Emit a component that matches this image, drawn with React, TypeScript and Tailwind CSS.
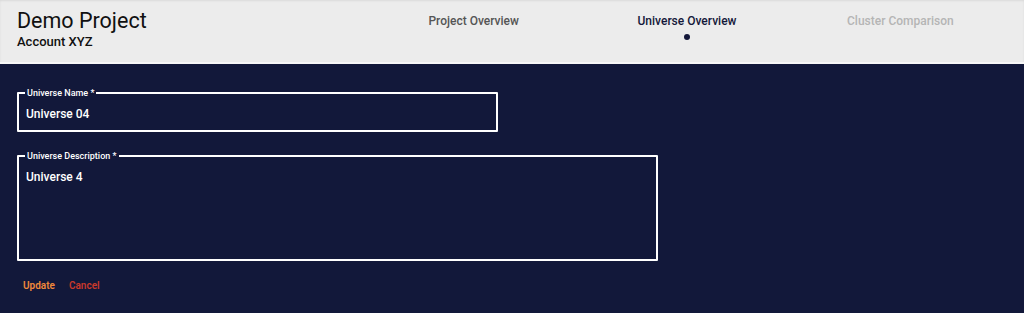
import React from "react";

const font = { fontFamily: "Roboto, 'Liberation Sans', sans-serif" };

const tabs = [
  { label: "Project Overview", state: "done" },
  { label: "Universe Overview", state: "active" },
  { label: "Cluster Comparison", state: "todo" },
];

function Field({ label, value, className }: { label: string; value: string; className: string }) {
  return (
    <fieldset className={`border-2 border-white rounded-[1px] pl-[7px] pr-[7px] ${className}`}>
      <legend className="ml-[-1px] px-[2px] text-[9px] font-medium leading-[10px] text-white">{label}</legend>
      <div className="text-[12px] font-medium leading-[16px] text-white">{value}</div>
    </fieldset>
  );
}

export default function App() {
  return (
    <div className="flex h-[313px] w-[1024px] flex-col bg-[#12183a]" style={font}>
      {/* top bar */}
      <header className="flex h-[64px] shrink-0 border-b-2 border-[#f7f7f7] bg-[#ececec] shadow-[inset_0_1px_2px_rgba(0,0,0,0.08)]">
        <div className="pl-[17px] pt-[8px]">
          <div className="text-[21.5px] leading-[26px] text-[#111]">Demo Project</div>
          <div className="text-[13px] font-medium leading-[15px] text-[#111]">Account XYZ</div>
        </div>
        <nav className="ml-auto mr-[17px] grid w-[640px] grid-cols-3 pt-[14px]">
          {tabs.map((t) => (
            <div key={t.label} className="flex flex-col items-center">
              <span
                className={
                  "text-[12px] font-medium leading-[14px] " +
                  (t.state === "active" ? "text-[#14183a]" : t.state === "done" ? "text-[#555]" : "text-[#b5b5b5]")
                }
              >
                {t.label}
              </span>
              {t.state === "active" && <span className="mt-[6px] h-[6px] w-[6px] rounded-full bg-[#14183a]" />}
            </div>
          ))}
        </nav>
      </header>

      {/* form */}
      <main className="flex flex-col pl-[17px] pt-[24px]">
        <Field label="Universe Name *" value="Universe 04" className="h-[44px] w-[481px] pt-[8px]" />
        <Field label="Universe Description *" value="Universe 4" className="mt-[19px] h-[110px] w-[641px] pt-[8px]" />
        <div className="mt-[17px] flex gap-[14px] pl-[6px] text-[10px] font-semibold">
          <button className="text-[#f0883a]">Update</button>
          <button className="text-[#c8392b]">Cancel</button>
        </div>
      </main>
    </div>
  );
}
